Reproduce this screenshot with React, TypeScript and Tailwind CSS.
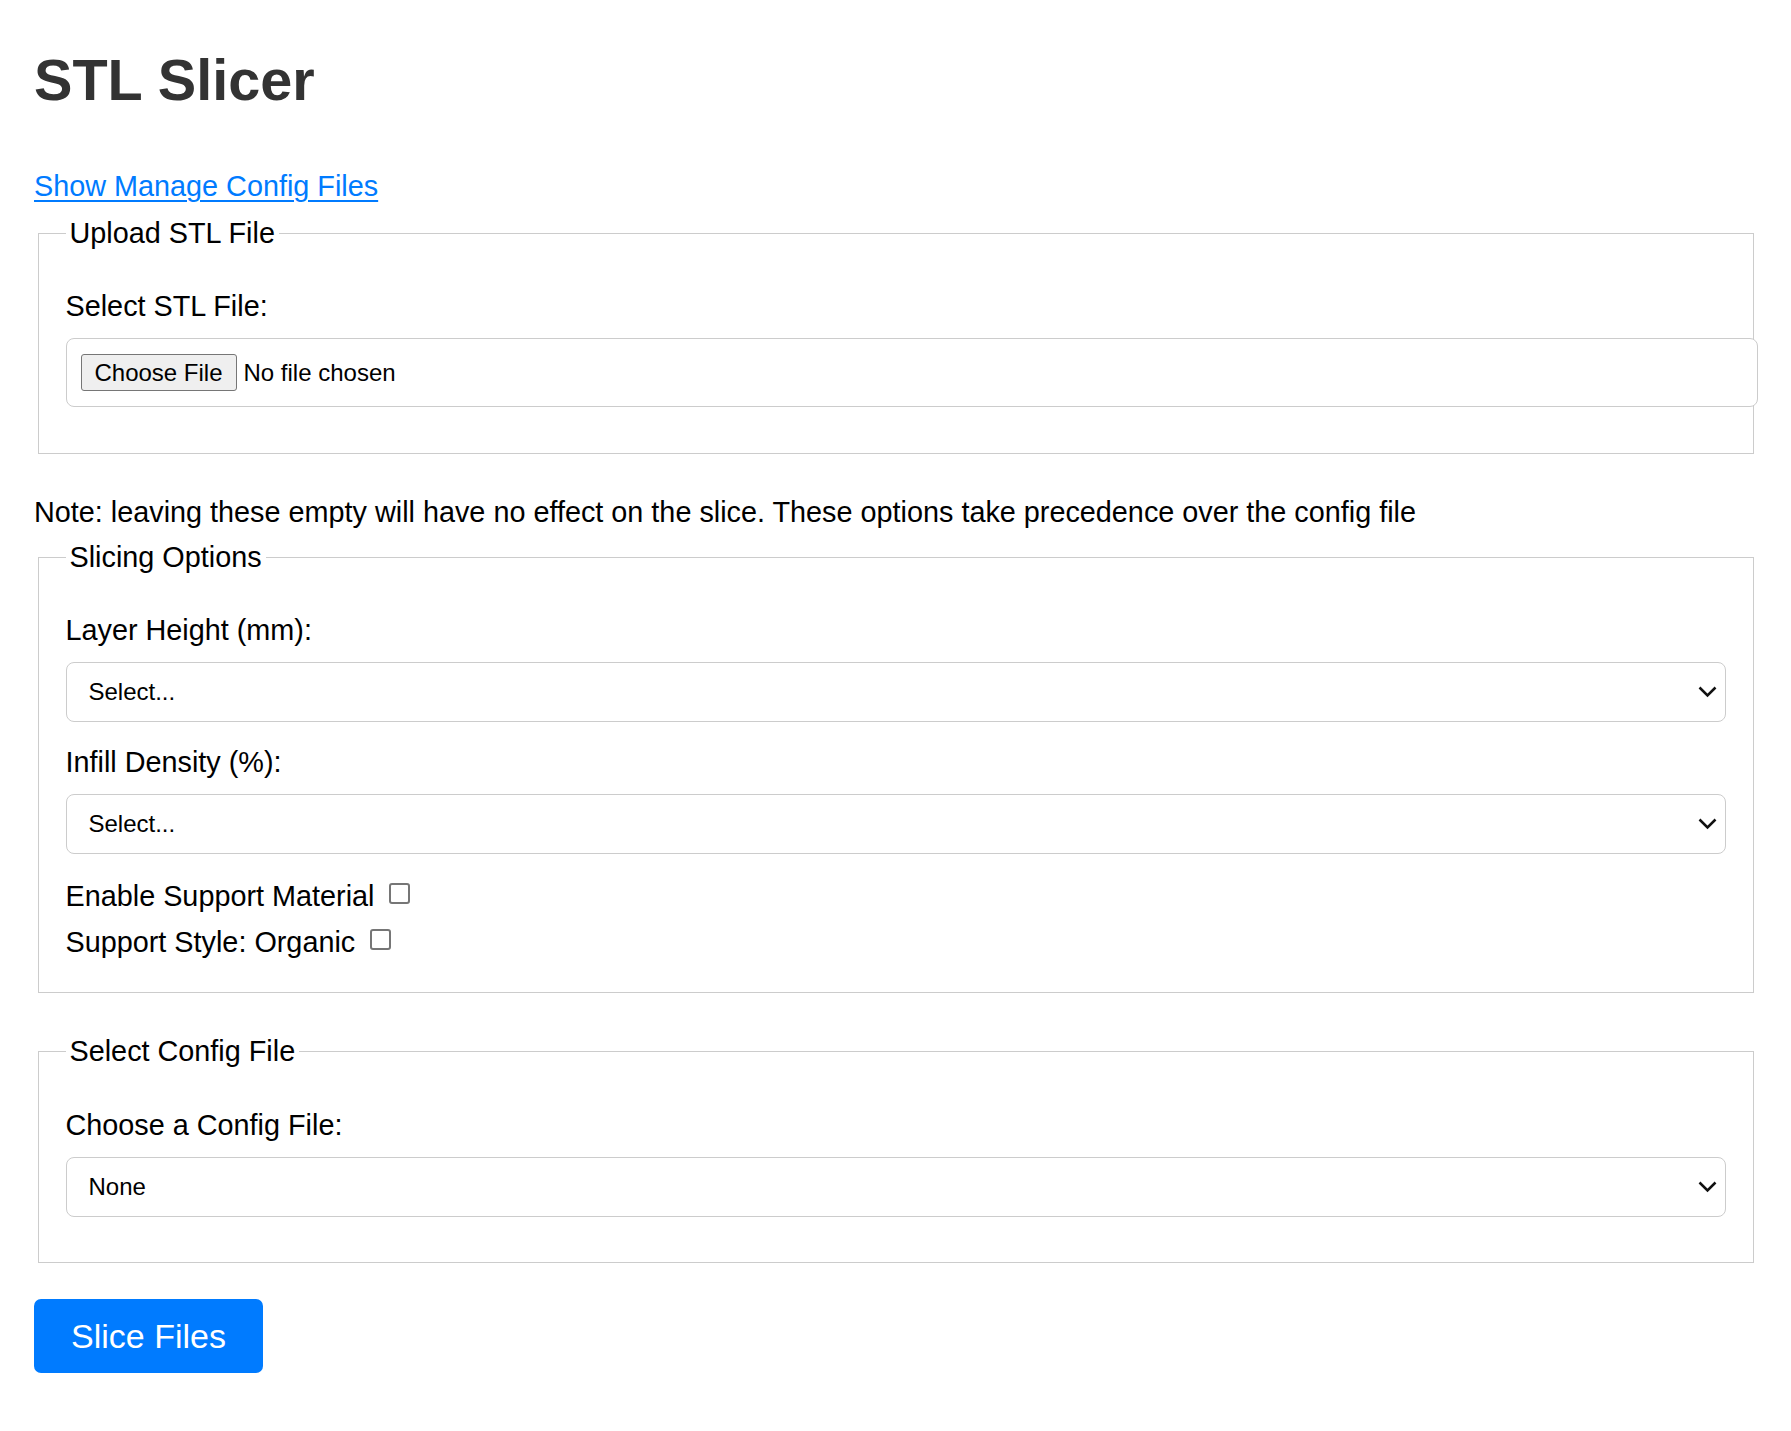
import React from "react";

function Chevron() {
  return (
    <svg width="19" height="12" viewBox="0 0 19 12" className="shrink-0">
      <path d="M1.5 1.5 L9.5 9.5 L17.5 1.5" fill="none" stroke="#111" strokeWidth="2.5" />
    </svg>
  );
}

function SelectBox({ value }: { value: string }) {
  return (
    <div className="mb-[24px] flex h-[60px] w-full items-center justify-between rounded-[8px] border border-[#cccccc] bg-white pl-[22px] pr-[8px] text-[24px] leading-[28px] text-black">
      <span>{value}</span>
      <Chevron />
    </div>
  );
}

function Label({ children }: { children: React.ReactNode }) {
  return <div className="mb-[15px] text-[28.8px] leading-[33px] text-black">{children}</div>;
}

function Legend({ children }: { children: React.ReactNode }) {
  return <legend className="px-[4px] text-[28.8px] leading-[33px] text-black">{children}</legend>;
}

function Checkbox() {
  return <span className="mb-[6px] ml-[15px] inline-block h-[21px] w-[21px] shrink-0 rounded-[3px] border-2 border-[#767676] bg-white" />;
}

export default function App() {
  return (
    <div
      className="min-h-screen bg-white px-[34px] pt-[47px] pb-[40px]"
      style={{ fontFamily: '"Liberation Sans", Arial, sans-serif' }}
    >
      <h1 className="text-[57.6px] font-bold leading-[66px] text-[#333333]">STL Slicer</h1>

      <div className="mt-[57px] text-[28.8px] leading-[33px]">
        <a href="#" className="text-[#007bff] underline decoration-[2px] underline-offset-[4px]">
          Show Manage Config Files
        </a>
      </div>

      <fieldset className="mx-[3.5px] mt-[14px] mb-[42px] border border-[#cccccc] px-[27px] pt-[40px] pb-[23px]">
        <Legend>Upload STL File</Legend>
        <Label>Select STL File:</Label>
        <div className="mb-[23px] flex w-[calc(100%+32px)] items-center rounded-[8px] border border-[#cccccc] bg-white px-[14px] py-[15px]">
          <span className="flex h-[37px] w-[156px] items-center justify-center rounded-[3px] border border-[#767676] bg-[#efefef] text-[24px] leading-[28px] text-black">
            Choose File
          </span>
          <span className="ml-[7px] text-[24px] leading-[28px] text-black">No file chosen</span>
        </div>
      </fieldset>

      <p className="text-[28.8px] leading-[33px] text-black">
        Note: leaving these empty will have no effect on the slice. These options take precedence over the config file
      </p>

      <fieldset className="mx-[3.5px] mt-[12px] mb-[42px] border border-[#cccccc] px-[27px] pt-[40px] pb-[21px]">
        <Legend>Slicing Options</Legend>
        <Label>Layer Height (mm):</Label>
        <SelectBox value="Select..." />
        <Label>Infill Density (%):</Label>
        <SelectBox value="Select..." />
        <div className="-mt-[5px] mb-[6px]">
          <div className="flex h-[46px] items-center text-[28.8px] leading-[33px] text-black">
            <span>Enable Support Material</span>
            <Checkbox />
          </div>
          <div className="flex h-[46px] items-center text-[28.8px] leading-[33px] text-black">
            <span>Support Style: Organic</span>
            <Checkbox />
          </div>
        </div>
      </fieldset>

      <fieldset className="mx-[3.5px] mb-[36px] border border-[#cccccc] px-[27px] pt-[41px] pb-[21px]">
        <Legend>Select Config File</Legend>
        <Label>Choose a Config File:</Label>
        <SelectBox value="None" />
      </fieldset>

      <button
        type="button"
        className="flex h-[74px] w-[229px] items-center justify-center rounded-[7px] bg-[#007bff] text-[34px] leading-[40px] text-white"
      >
        Slice Files
      </button>
    </div>
  );
}
